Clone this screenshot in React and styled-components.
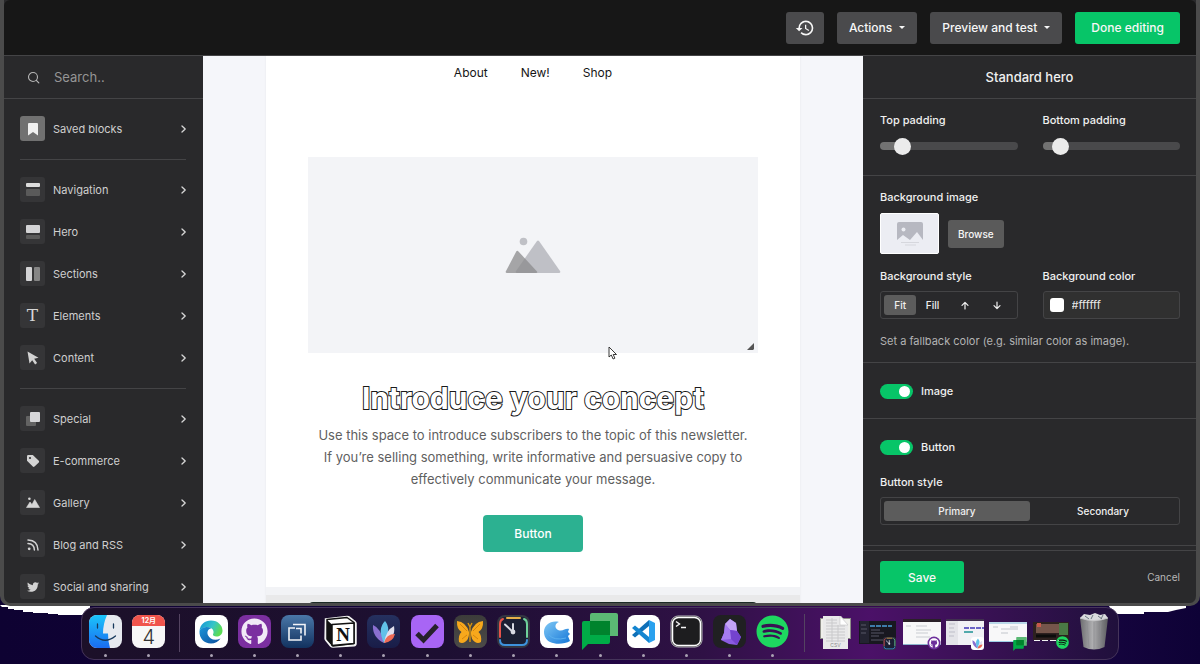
import React from "react";
import styled, { createGlobalStyle, css } from "styled-components";
import { MdHistory } from "react-icons/md";
import { FaGithub, FaTwitter, FaSpotify } from "react-icons/fa";

const GlobalStyle = createGlobalStyle`
  *, *::before, *::after { box-sizing: border-box; }
  body { margin: 0; background: #0d0230; }
  body, button, input { font-family: Inter, "Liberation Sans", sans-serif; }
  button { border: 0; padding: 0; background: none; color: inherit; cursor: pointer; }
  h1, h2, p, fieldset, legend { margin: 0; padding: 0; border: 0; }
`;

/* ---------- desktop and window ---------- */

const Desktop = styled.div`
  position: relative;
  display: flex;
  flex-direction: column;
  height: 100vh;
  min-height: 600px;
  overflow: hidden;
  background: linear-gradient(90deg, #0e0232 0%, #12033a 40%, #33084f 64%, #33094f 78%, #170540 90%, #0e0236 100%);
`;

const AppWindow = styled.div`
  flex: 1;
  min-height: 0;
  display: flex;
  flex-direction: column;
  border: solid #4b4b4b;
  border-width: 0 4px 3px;
  border-radius: 0 0 10px 10px;
  background: #29292b;
  overflow: hidden;
  position: relative;
`;

const TopBar = styled.header`
  display: flex;
  justify-content: flex-end;
  align-items: center;
  gap: 13px;
  flex: 0 0 56px;
  padding: 0 16px;
  background: #171717;
  border-bottom: 1px solid #444446;
  border-radius: 6px 6px 0 0;
`;

const Button = styled.button`
  display: flex;
  align-items: center;
  justify-content: center;
  gap: 7px;
  height: ${(p) => p.$height || 32}px;
  padding: 0 ${(p) => p.$pad || 12}px;
  border-radius: 3px;
  background: ${(p) => (p.$primary ? "#07c568" : p.$soft ? "#5a5a5a" : "#4a4a4c")};
  color: #f7f7f7;
  font-size: ${(p) => p.$size || 12}px;
  font-weight: 500;
  white-space: nowrap;
`;

const Caret = styled.span`
  border: solid transparent;
  border-width: 3px 3px 0;
  border-top-color: currentColor;
`;

const Workspace = styled.div`
  flex: 1;
  min-height: 0;
  display: grid;
  grid-template-columns: 199px minmax(0, 1fr) 333px;
`;

/* ---------- block library ---------- */

const Sidebar = styled.nav`
  overflow: hidden;
  color: #cfcfcf;
`;

const SearchRow = styled.label`
  display: flex;
  align-items: center;
  height: 43px;
  padding: 0 17px 0 23px;
  gap: 14px;
  border-bottom: 1px solid #444446;
`;

const SearchInput = styled.input`
  flex: 1;
  min-width: 0;
  padding: 0;
  border: 0;
  outline: 0;
  background: none;
  color: #e5e5e5;
  font-size: 13px;
  &::placeholder { color: #959595; opacity: 1; }
`;

const BlockGroup = styled.ul`
  list-style: none;
  display: flex;
  flex-direction: column;
  gap: 17px;
  margin: 0 17px 0 16px;
  padding: 17px 0 18px;
  & + & { border-top: 1px solid #444446; }
`;

const BlockRow = styled.button`
  display: flex;
  align-items: center;
  gap: 8px;
  width: 100%;
  height: 25px;
  text-align: left;
  font-size: 11px;
  & > span:nth-child(2) { flex: 1; }
`;

const BlockIcon = styled.span`
  display: grid;
  place-items: center;
  width: 25px;
  height: 25px;
  border-radius: 3px;
  background: ${(p) => (p.$active ? "#717171" : "#353537")};
`;

const LetterIcon = styled.span`
  font: 400 17px/17px "DejaVu Serif", serif;
  color: #d6d6d6;
`;

/* ---------- email canvas ---------- */

const Canvas = styled.main`
  overflow: hidden;
  background: #f5f6fa;
`;

const Email = styled.article`
  max-width: 534px;
  margin: 0 auto;
  background: #fff;
  text-align: center;
  box-shadow: 0 0 2px #e6e7ec;
`;

const EmailNav = styled.nav`
  display: flex;
  justify-content: center;
  gap: 33px;
  height: 101px;
  padding-top: 9px;
  a { color: #161616; font-size: 12px; line-height: 16px; text-decoration: none; }
`;

const Hero = styled.section`
  display: flex;
  flex-direction: column;
  align-items: center;
  padding: 0 42px 35px;
`;

const HeroImage = styled.div`
  position: relative;
  display: grid;
  place-items: center;
  width: 100%;
  height: 196px;
  background: #f3f4f7;
`;

const Resize = styled.svg`
  position: absolute;
  right: 4px;
  bottom: 3px;
`;

const Cursor = styled.svg`
  position: absolute;
  left: 300px;
  bottom: -8px;
`;

const HeroTitle = styled.h1`
  margin-top: 27px;
  font-size: 30px;
  line-height: 36px;
  font-weight: 700;
  color: #fff;
  -webkit-text-stroke: 2px #1a1a1a;
  paint-order: stroke fill;
  white-space: nowrap;
`;

const HeroText = styled.p`
  margin-top: 8px;
  font-size: 13px;
  line-height: 22px;
  color: #5f5f5f;
  white-space: nowrap;
`;

const HeroButton = styled.button`
  width: 100px;
  height: 37px;
  margin-top: 25px;
  border-radius: 4px;
  background: #2cb191;
  color: #fff;
  font-size: 12px;
  font-weight: 500;
`;

const NextBlock = styled.section`
  border-top: 8px solid #f2f3f6;
  padding: 7px 43px 0;
  background: #e9e9ea;
  &::before { content: ""; display: block; height: 20px; border-radius: 4px; background: #1d2b26; }
`;

/* ---------- settings panel ---------- */

const Panel = styled.aside`
  display: flex;
  flex-direction: column;
  min-height: 0;
  color: #f0f0f0;
  font-size: 11px;
  line-height: 14px;
  font-weight: 500;
`;

const PanelTitle = styled.h2`
  flex: none;
  height: 43px;
  font-size: 13px;
  line-height: 42px;
  font-weight: 500;
  text-align: center;
  border-bottom: 1px solid #444446;
`;

const PanelBody = styled.div`
  flex: 1;
  min-height: 0;
  overflow: hidden;
`;

const Section = styled.section`
  display: flex;
  flex-direction: column;
  padding: ${(p) => p.$pad};
  border-bottom: 1px solid #444446;
`;

const Columns = styled.div`
  display: grid;
  grid-template-columns: repeat(2, minmax(0, 1fr));
  gap: 25px;
`;

const Field = styled.div`
  display: flex;
  flex-direction: column;
  gap: 8px;
  margin-top: ${(p) => p.$top || 0}px;
`;

const Range = styled.input.attrs({ type: "range" })`
  appearance: none;
  width: 100%;
  height: 17px;
  margin: 2px 0 0;
  background: none;
  &::-webkit-slider-runnable-track {
    height: 8px;
    border-radius: 4px;
    background: linear-gradient(90deg, #727272 ${(p) => p.value}%, #49494b ${(p) => p.value}%);
  }
  &::-webkit-slider-thumb {
    appearance: none;
    width: 17px;
    height: 17px;
    margin-top: -4px;
    border-radius: 50%;
    background: #ebebeb;
  }
`;

const ImageRow = styled.div`
  display: flex;
  align-items: center;
  gap: 9px;
  margin: 9px 0 15px;
`;

const Thumb = styled.div`
  display: grid;
  place-items: center;
  width: 59px;
  height: 41px;
  border-radius: 2px;
  border: 1px solid #fff;
  background: #ecedf3;
`;

const Segments = styled.fieldset`
  display: grid;
  grid-template-columns: repeat(${(p) => p.$count}, minmax(0, 1fr));
  min-width: 0;
  height: 28px;
  padding: 3px;
  border: 1px solid #444446;
  border-radius: 3px;
`;

const Segment = styled.label`
  position: relative;
  display: grid;
  place-items: center;
  height: 20px;
  border-radius: 3px;
  font-size: 10px;
  input { position: absolute; inset: 0; margin: 0; opacity: 0; }
  &:has(input:checked) { background: #5c5c5c; }
`;

const ColorField = styled.div`
  display: flex;
  align-items: center;
  gap: 8px;
  height: 28px;
  padding: 0 6px;
  border: 1px solid #444446;
  border-radius: 3px;
  background: #303030;
  input { flex: 1; min-width: 0; padding: 0; border: 0; outline: 0; background: none; color: #e8e8e8; font-size: 11px; }
`;

const Swatch = styled.span`
  width: 14px;
  height: 14px;
  border-radius: 3px;
  background: #fff;
`;

const Hint = styled.p`
  margin-top: 15px;
  color: #b3b3b3;
  font-weight: 400;
`;

const Toggle = styled.label`
  display: flex;
  align-items: center;
  gap: 8px;
  height: 16px;
  input {
    appearance: none;
    display: flex;
    justify-content: flex-end;
    align-items: center;
    width: 33px;
    height: 15px;
    margin: 0;
    padding: 0 3px;
    border-radius: 8px;
    background: #07c568;
  }
  input::before { content: ""; width: 11px; height: 11px; border-radius: 50%; background: #fff; }
`;

const PanelFooter = styled.footer`
  display: flex;
  align-items: center;
  justify-content: space-between;
  flex: 0 0 53px;
  padding: 0 16px 0 17px;
  border-top: 1px solid #444446;
`;

const Cancel = styled.button`
  color: #b8b8b8;
  font-size: 10px;
`;

/* ---------- dock ---------- */

const Glow = styled.svg`
  position: absolute;
  bottom: 48px;
  ${(p) => (p.$right ? css`right: 14px;` : css`left: 0;`)}
`;

const Dock = styled.nav`
  position: relative;
  display: flex;
  flex: 0 0 53px;
  width: calc(100% - 162px);
  margin: 1px auto 4px;
  padding: 0 2px;
  border: 1px solid #45345a;
  border-radius: 13px;
  background: linear-gradient(90deg, #1c1029 0%, #1d0f32 35%, #2f1145 60%, #4b1168 76%, #371152 88%, #20103c 100%);
`;

const DockSlot = styled.button`
  flex: 1 1 0;
  min-width: 0;
  display: flex;
  flex-direction: column;
  align-items: center;
  padding-top: ${(p) => (p.$running ? 7 : 5)}px;
  svg { display: block; overflow: visible; flex: none; }
  ${(p) => p.$running && css`
    &::after {
      content: "";
      width: 3px;
      height: 3px;
      margin-top: 6px;
      border-radius: 50%;
      background: #aaa2b3;
    }
  `}
`;

const DockRule = styled.span`
  flex: 0 0 19px;
  display: flex;
  justify-content: center;
  &::before { content: ""; width: 1px; margin: 6px 0 7px; background: #544461; }
`;

const Tile = styled.span`
  display: grid;
  place-items: center;
  place-content: center;
  flex: none;
  width: 33px;
  height: 33px;
  border-radius: 8px;
  overflow: ${(p) => (p.$open ? "visible" : "hidden")};
  background: ${(p) => p.$bg || "none"};
  color: ${(p) => p.$color || "#fff"};
`;

const CalendarTile = styled(Tile)`
  grid-template: 11px 22px / 33px;
  color: #333;
  font-size: 20px;
  line-height: 22px;
  font-weight: 300;
  b {
    width: 100%;
    background: #f0544c;
    color: #fff;
    font: 700 7px/11px Inter, "Noto Sans CJK JP", sans-serif;
  }
`;

/* ---------- drawings ---------- */

const Svg = ({ w, h = w, vb, children }) => (
  <svg width={w} height={h} viewBox={vb || `0 0 ${w} ${h}`} fill="none" aria-hidden="true">{children}</svg>
);

const Chevron = () => (
  <Svg w={6} h={8}><path d="M2 1l3.2 3L2 7" stroke="#d6d6d6" strokeWidth="1.3" strokeLinecap="round" strokeLinejoin="round" /></Svg>
);

const blockIcons = {
  saved: <Svg w={12} h={14}><path d="M1 2Q1 1 2 1h8q1 0 1 1v11.4L6 10l-5 3.4z" fill="#f0f0f0" /></Svg>,
  navigation: <Svg w={14}><rect width="14" height="4" y="0" rx="1" fill="#dcdcdc" /><rect width="14" height="7" y="6" rx="1" fill="#5a5a5a" /></Svg>,
  hero: <Svg w={14}><rect width="14" height="8" rx="1" fill="#d4d4d6" /><rect width="14" height="4" y="10" rx="1" fill="#5a5a5a" /></Svg>,
  sections: <Svg w={14}><rect width="6" height="14" rx="1" fill="#d4d4d6" /><rect width="6" height="14" x="8" rx="1" fill="#858585" /></Svg>,
  elements: <LetterIcon aria-hidden="true">T</LetterIcon>,
  content: <Svg w={14}><path d="M1.500 0.500l11 6.300-4.300 1 2.900 4.200-2 1.500-2.900-4.200-2.700 3.200z" fill="#d2d2d2" /></Svg>,
  special: <Svg w={14}><rect x="0" y="4" width="10" height="10" rx="1" fill="#636363" /><rect x="4" y="0" width="10" height="10" rx="1" fill="#d6d6d8" /></Svg>,
  ecommerce: <Svg w={14}><path d="M1 2.200Q1 1 2.200 1h4.600l6 5.700q.8.9 0 1.700l-4.300 4.200q-.8.8-1.700 0L1 6.800z" fill="#d4d4d4" /><circle cx="4" cy="4" r="1.100" fill="#353537" /></Svg>,
  gallery: <Svg w={14}><path d="M.5 11.500L4 6l2 2.600L8.700 3.500l4.800 8z" fill="#d6d6d6" stroke="#d6d6d6" strokeWidth=".6" strokeLinejoin="round" /><circle cx="3.400" cy="2.800" r="1.300" fill="#d6d6d6" /></Svg>,
  rss: <Svg w={14}><g stroke="#d2d2d2" strokeWidth="1.500" strokeLinecap="round"><path d="M2 2q9.800.4 10 10M2 5.600q6.200.4 6.400 6.400" /></g><circle cx="3.200" cy="10.800" r="1.400" fill="#d2d2d2" /></Svg>,
  social: <FaTwitter size={12} color="#d2d2d2" aria-hidden="true" />,
};

const Finder = () => (
  <Svg w={33}>
    <defs>
      <linearGradient id="fb" x2="0" y2="1"><stop stopColor="#1bc5fb" /><stop offset="1" stopColor="#1a6bf0" /></linearGradient>
      <clipPath id="fc"><rect width="33" height="33" rx="8" /></clipPath>
    </defs>
    <g clipPath="url(#fc)">
      <rect width="33" height="33" fill="#e6e9ef" />
      <path d="M0 0h18Q14 9 14 18.500h5Q19 27 21 33H0z" fill="url(#fb)" />
      <path d="M8.500 9v4M24.500 9v4" stroke="#17385c" strokeWidth="1.300" strokeLinecap="round" />
      <path d="M6.500 21Q16 29.500 26.500 21" stroke="#17385c" strokeWidth="1.300" strokeLinecap="round" />
    </g>
  </Svg>
);

const Edge = () => (
  <Svg w={24}>
    <defs>
      <linearGradient id="e1" x2="1" y2=".4"><stop stopColor="#1492d8" /><stop offset=".6" stopColor="#35c4c9" /><stop offset="1" stopColor="#5bdb55" /></linearGradient>
      <linearGradient id="e2" x2="1" y2="1"><stop stopColor="#1c95d8" /><stop offset="1" stopColor="#0d4f9e" /></linearGradient>
    </defs>
    <path d="M.5 11C1 4.500 6 .5 12 .5c7 0 11.500 5 11.500 10 0 4-3 6-6 6-2.500 0-4-1-3.500-2.200 1-1.500.8-4.300-1.300-5.800C8.500 6 2.500 7 .5 11z" fill="url(#e1)" />
    <path d="M.5 11C2.500 7 8.500 6 12.200 8.300c-3.500.8-4.500 4-3.200 7 1.800 4 7 6 12.500 3.200C19 22 16 23.500 12 23.500 5 23.500 0 18 .5 11z" fill="url(#e2)" />
  </Svg>
);

const Boxes = () => (
  <Svg w={20}><g stroke="#f2f4f8" strokeWidth="1.600"><path d="M6 2.500h12v11" /><path d="M8 6H2v12h12v-4.500" /><path d="M9 6.500h5v5" /></g></Svg>
);

const Notion = () => (
  <Svg w={33}>
    <path d="M1.500 4L23 1.500q2 0 3 1l5 4q1 .8 1 2v20q0 2-2 2.200L9 32q-1.500 0-2.500-1L2 25.500q-.9-1-.9-2z" fill="#fff" stroke="#f4f4f4" strokeWidth="1.500" />
    <path d="M3 4.500L23 2.500l7 5v21L9 31l-6-7z" stroke="#111" strokeWidth="1.500" strokeLinejoin="round" fill="#fff" />
    <path d="M3 5l5 4.500v20.500L3 24z" fill="#111" />
    <path d="M8 9.500L30 8v20.500L8 30.500z" fill="#fff" stroke="#111" strokeWidth="1.500" strokeLinejoin="round" />
    <text x="19" y="26" textAnchor="middle" fontFamily="Liberation Serif, serif" fontWeight="700" fontSize="19" fill="#111">N</text>
  </Svg>
);

const Lotus = () => (
  <Svg w={24}>
    <path d="M12 23Q0 17 1 5q8 3 11 18z" fill="#8a6fd0" />
    <path d="M12 23Q5 9 13 1q7 8-1 22z" fill="#62c1e8" />
    <path d="M12 23Q14 10 22 6q2 12-10 17z" fill="#dfe0ee" />
    <path d="M12 23q2-9 11-9-2 8-11 9z" fill="#ee6a55" />
  </Svg>
);

const Check = () => <Svg w={26}><path d="M3 14.500l6.500 6.500L23 6.500" stroke="#26212b" strokeWidth="5" /></Svg>;

const Butterfly = () => (
  <Svg w={28}>
    <path d="M13 14Q10 4 1 3q-.5 8 4.500 11Q2 17 3 24q3 2 6 0 4-3 4-8z" fill="#f7a81c" />
    <path d="M15 14Q18 4 27 3q.5 8-4.500 11Q26 17 25 24q-3 2-6 0-4-3-4-8z" fill="#f7a81c" />
    <path d="M14 9v15M14 9l-2-4M14 9l2-4" stroke="#d8930f" strokeWidth="1.400" />
    <path d="M4 6l7 7M24 6l-7 7M6 21l5-4M22 21l-5-4" stroke="#c97a0b" strokeWidth=".8" />
  </Svg>
);

const Clock = ({ size = 33 }) => (
  <Svg w={size} vb="0 0 33 33">
    <rect width="33" height="33" rx="8" fill="#343642" />
    <rect x="2" y="2" width="29" height="29" rx="6" fill="#1b1f33" />
    <g strokeWidth="2" strokeLinecap="round">
      <path d="M10 3h13" stroke="#e8b04a" /><path d="M6 4Q3 5 3 9v13" stroke="#e5534b" />
      <path d="M27 4q3 1 3 5v13" stroke="#6fd39a" /><path d="M3 25q0 5 5 5h17q5 0 5-5" stroke="#3e93dc" />
    </g>
    <path d="M16 17L8 9.500M16 17V9" stroke="#d8dae2" strokeWidth="2" strokeLinecap="round" />
    <circle cx="16" cy="17" r="2.400" fill="#d8dae2" />
  </Svg>
);

const Wave = () => (
  <Svg w={28}>
    <defs><linearGradient id="wv" x2="1" y2="1"><stop stopColor="#7fc8f5" /><stop offset="1" stopColor="#1677d8" /></linearGradient></defs>
    <path d="M1 14C1 7 8 2 16 4c-4 1-5 6-1 8 5 2 7-2 11-1l-1 3 2 2-2 2 2 5c-5 3-14 4-20 1-4-2-6-6-6-10z" fill="url(#wv)" />
    <path d="M6 17q5 6 17 3" stroke="#5bb0ee" strokeWidth="1" />
  </Svg>
);

const Chat = ({ w = 36, h = 37 }) => (
  <Svg w={w} h={h} vb="0 0 36 37">
    <path d="M10 0h24q2 0 2 2v21H12V22H8V2q0-2 2-2z" fill="#5bb974" />
    <path d="M2 8h26v21q0 2-2 2H6l-6 6V10q0-2 2-2z" fill="#00ac47" />
    <path d="M8 8h20v14H8z" fill="#00832d" />
  </Svg>
);

const VsCode = () => (
  <Svg w={25}>
    <path d="M18 1l6 3v17l-6 3z" fill="#2aa1ee" />
    <path d="M18 1v6L4 18.500 1 16z" fill="#0f70b8" /><path d="M18 24v-6L4 6.500 1 9z" fill="#1485d0" />
  </Svg>
);

const Terminal = () => (
  <Svg w={33}>
    <rect x="1" y="1" width="31" height="31" rx="7" fill="#1d1d1f" stroke="#b9b9bd" strokeWidth="1" />
    <rect x="2.500" y="2.500" width="28" height="28" rx="6" stroke="#fff" strokeWidth="1.500" />
    <path d="M6 6.500l3.500 2.500L6 11.500M11 12.500h5" stroke="#f5f5f5" strokeWidth="1.400" />
  </Svg>
);

const Crystal = () => (
  <Svg w={24} h={28}>
    <path d="M12 1l6 4 1 8 4 6-4 8-8-1-8-4 3-7 1-9z" fill="#8a5be0" />
    <path d="M12 1l6 4 1 8-7-1-5-6z" fill="#c3a3f7" />
    <path d="M12 12l7 1 4 6-4 8-6-6z" fill="#7443cf" /><path d="M7 6l5 6 1 9-10 1 3-7z" fill="#a57cf0" />
  </Svg>
);

const Documents = () => (
  <Svg w={31} h={36}>
    <path d="M0 5h31v21H0z" fill="#8d8e88" /><path d="M1 6h29v19H1z" fill="#efefeb" />
    <path d="M3 3h18l7 8v25H3z" fill="#e9e9ea" /><path d="M20 3l8 9h-8z" fill="#fff" stroke="#bbb" strokeWidth=".5" />
    <path d="M6 7h11M6 10h11M6 13h19M6 16h19M6 19h19M6 22h19M6 25h19M6 28h19M12 5v24M18 12v17" stroke="#c9c9cb" strokeWidth="1" />
    <text x="15.500" y="34" textAnchor="middle" fontFamily="Inter, sans-serif" fontSize="5" fill="#8a8a8a">CSV</text>
  </Svg>
);

const Trash = () => (
  <Svg w={30} h={37}>
    <defs><linearGradient id="tr" x2="1"><stop stopColor="#6d6d70" /><stop offset=".45" stopColor="#aeaeb0" /><stop offset="1" stopColor="#5c5c60" /></linearGradient></defs>
    <path d="M1 5l4-4 6 1 5-2 5 2 5-1 3 4-3 4H4z" fill="#d9dadd" />
    <path d="M6 3l4 3M14 2l-2 4M19 3l4 3M24 2l-2 4" stroke="#6b7780" strokeWidth="1" />
    <path d="M1 5q14 5 28 0l-3.500 29q-10.500 5-21 0z" fill="url(#tr)" />
    <path d="M1 5q14 5 28 0" stroke="#c8c8ca" />
    <path d="M8 9l2 26M15 9v27M22 9l-2 26" stroke="#8d8d90" strokeWidth=".7" />
  </Svg>
);

const MiniWindow = ({ kind, children }) => (
  <Svg w={38} h={36}>
    <g transform="translate(0 3)">
      {kind === "code" && <>
        <rect y="5" width="37" height="23" fill="#181820" /><rect x="1" y="5" width="9" height="22" fill="#242432" />
        <path d="M11 10h22" stroke="#3e7ba8" strokeWidth="2" strokeDasharray="5 1" /><path d="M12 14h9M12 17h13M12 20h8M12 24h12M2 9h5M2 13h6M2 17h5" stroke="#565666" />
      </>}
      {kind === "page" && <>
        <rect y="3" width="38" height="26" fill="#f7f7f8" /><rect y="3" width="38" height="3" fill="#2a2028" />
        <path d="M13 10h11M13 14h15M13 17h12M13 21h14M3 10h5" stroke="#c9ccd1" /><path d="M0 28.500h38" stroke="#8bb4cc" />
      </>}
      {kind === "doc" && <>
        <rect y="5" width="38" height="24" fill="#f1f1f5" /><rect y="3" width="38" height="2" fill="#40304f" /><rect y="5" width="12" height="24" fill="#e4e4e9" />
        <path d="M18 12h20" stroke="#6a63c6" strokeWidth="2" strokeDasharray="5 1" /><path d="M18 16h9" stroke="#52a9ac" strokeWidth="2" /><path d="M3 8h6M3 12h5M3 16h6M3 20h5" stroke="#bdbdc8" />
      </>}
      {kind === "chat" && <>
        <rect y="6" width="38" height="20" fill="#f8f8f9" /><rect y="6" width="38" height="2" fill="#b9d8e8" />
        <path d="M4 11h5M12 13h17M12 17h7M21 11h8" stroke="#c2c6cc" /><path d="M0 25.500h38" stroke="#9fd0e8" />
      </>}
      {kind === "player" && <>
        <rect x="1" y="6" width="36" height="18" fill="#2d201f" /><rect x="4" y="8" width="23" height="9" fill="#75554b" /><rect x="5" y="7" width="4" height="4" fill="#c8584a" />
        <rect x="27" y="7" width="9" height="12" fill="#4a7a45" /><path d="M4 20h20" stroke="#0c0c0c" strokeWidth="3" /><path d="M2 24.500h32" stroke="#f3f3f3" strokeDasharray="6 2" />
      </>}
      {children}
    </g>
  </Svg>
);

/* ---------- data ---------- */

const blockGroups = [
  [["saved", "Saved blocks"]],
  [["navigation", "Navigation"], ["hero", "Hero"], ["sections", "Sections"], ["elements", "Elements"], ["content", "Content"]],
  [["special", "Special"], ["ecommerce", "E-commerce"], ["gallery", "Gallery"], ["rss", "Blog and RSS"], ["social", "Social and sharing"]],
];

const dockItems = [
  ["Finder", <Finder />, true],
  ["Calendar", <CalendarTile $bg="#f7f7f7"><b>12月</b>4</CalendarTile>, true],
  null,
  ["Edge", <Tile $bg="#fff"><Edge /></Tile>, true],
  ["GitHub", <Tile $bg="#7b2fa0" $color="#f1e9f7"><FaGithub size={27} /></Tile>, true],
  ["Remote desktop", <Tile $bg="linear-gradient(#4a77a8, #12325f)"><Boxes /></Tile>, true],
  ["Notion", <Notion />, true],
  ["Journal", <Tile $bg="linear-gradient(#25305f, #191d48)"><Lotus /></Tile>, true],
  ["Tasks", <Tile $bg="#a865f5"><Check /></Tile>, true],
  ["Butterfly", <Tile $bg="linear-gradient(#3c3c3a, #4b4a48)"><Butterfly /></Tile>, true],
  ["Clock", <Clock />, true],
  ["Wave", <Tile $bg="#fff"><Wave /></Tile>, true],
  ["Chat", <Tile $open><Chat /></Tile>, true],
  ["Code editor", <Tile $bg="#fff"><VsCode /></Tile>, true],
  ["Terminal", <Terminal />, true],
  ["Notes", <Tile $bg="#202022"><Crystal /></Tile>, true],
  ["Spotify", <Tile $open><FaSpotify size={33} color="#1ed760" /></Tile>, true],
  null,
  ["Documents", <Documents />, false],
  ["Editor window", <MiniWindow kind="code"><g transform="translate(24 21)"><Clock size={13} /></g></MiniWindow>, false],
  ["GitHub window", <MiniWindow kind="page"><circle cx="31" cy="27" r="6.500" fill="#6d2f9b" /><g transform="translate(26 22)"><FaGithub size={10} color="#fff" /></g></MiniWindow>, false],
  ["Journal window", <MiniWindow kind="doc"><rect x="25" y="21" width="13" height="13" rx="3" fill="#fff" /><g transform="translate(26 22) scale(.46)"><Lotus /></g></MiniWindow>, false],
  ["Chat window", <MiniWindow kind="chat"><g transform="translate(24 21)"><Chat w={14} h={14} /></g></MiniWindow>, false],
  ["Spotify window", <MiniWindow kind="player"><circle cx="31" cy="27" r="5" fill="#111" /><g transform="translate(24 20)"><FaSpotify size={13} color="#1ed760" /></g></MiniWindow>, false],
  ["Trash", <Trash />, false],
];

function Option({ name, label, children, checked }) {
  return (
    <Segment>
      <input type="radio" name={name} aria-label={label} defaultChecked={checked} />
      {children || label}
    </Segment>
  );
}

function RangeField({ id, label, start }) {
  const [value, setValue] = React.useState(start);
  return (
    <Field>
      <label htmlFor={id}>{label}</label>
      <Range id={id} value={value} onChange={(e) => setValue(e.target.value)} />
    </Field>
  );
}

const Arrow = ({ down }) => (
  <Svg w={8} h={9}>
    <path d={down ? "M4 1v6.500M1 4.700l3 3 3-3" : "M4 8V1.500M1 4.300l3-3 3 3"} stroke="#f0f0f0" strokeWidth="1.200" strokeLinecap="round" strokeLinejoin="round" />
  </Svg>
);

export default function App() {
  return (
    <Desktop>
      <GlobalStyle />
      <Glow width="90" height="11"><path d="M0 0h90v10H58V9H48V8H33V7H23V5H14V4H8V2H2z" fill="#fff" /></Glow>
      <Glow $right width="78" height="12"><path d="M0 0h78v4l-10 2-8 2H36v2H10L4 8z" fill="#fff" /></Glow>
      <AppWindow>
        <TopBar>
          <Button $pad={9} aria-label="History"><MdHistory size={20} /></Button>
          <Button>Actions <Caret /></Button>
          <Button>Preview and test <Caret /></Button>
          <Button $primary $pad={16}>Done editing</Button>
        </TopBar>
        <Workspace>
          <Sidebar aria-label="Blocks">
            <SearchRow>
              <Svg w={13}><circle cx="6" cy="6" r="4.500" stroke="#b5b5b5" strokeWidth="1.100" /><path d="M9.300 9.300l2.500 2.500" stroke="#b5b5b5" strokeWidth="1.200" strokeLinecap="round" /></Svg>
              <SearchInput type="text" placeholder="Search.." aria-label="Search blocks" />
            </SearchRow>
            {blockGroups.map((group, i) => (
              <BlockGroup key={i}>
                {group.map(([icon, label]) => (
                  <li key={icon}>
                    <BlockRow>
                      <BlockIcon $active={icon === "saved"}>{blockIcons[icon]}</BlockIcon>
                      <span>{label}</span>
                      <Chevron />
                    </BlockRow>
                  </li>
                ))}
              </BlockGroup>
            ))}
          </Sidebar>

          <Canvas>
            <Email>
              <EmailNav>
                <a href="#about">About</a>
                <a href="#new">New!</a>
                <a href="#shop">Shop</a>
              </EmailNav>
              <Hero>
                <HeroImage>
                  <Svg w={56} h={37}>
                    <circle cx="18.500" cy="4.500" r="3.800" fill="#bfc0c6" />
                    <path d="M32 4q1-1 2 0l21 30q1 2-1 2H12q-2 0-1-2z" fill="#bfc0c6" />
                    <path d="M11 15q1-2 2.500-.5L32 34.500q1 1.500-1 1.500H2q-2 0-1-2z" fill="#8b8b8c" fillOpacity=".75" />
                  </Svg>
                  <Resize width="7" height="7"><path d="M7 0v6l-1 1H0z" fill="#555" /></Resize>
                  <Cursor width="10" height="15" viewBox="0 0 10 15"><path d="M1 1v10l2.300-2 1.800 4 1.800-.8-1.700-3.700H8.500z" fill="#fff" stroke="#222" strokeWidth=".9" /></Cursor>
                </HeroImage>
                <HeroTitle>Introduce your concept</HeroTitle>
                <HeroText>
                  Use this space to introduce subscribers to the topic of this newsletter.<br />
                  If you’re selling something, write informative and persuasive copy to<br />
                  effectively communicate your message.
                </HeroText>
                <HeroButton>Button</HeroButton>
              </Hero>
              <NextBlock />
            </Email>
          </Canvas>

          <Panel>
            <PanelTitle>Standard hero</PanelTitle>
            <PanelBody>
              <Section $pad="14px 16px 21px 17px">
                <Columns>
                  <RangeField id="top-padding" label="Top padding" start={12} />
                  <RangeField id="bottom-padding" label="Bottom padding" start={8} />
                </Columns>
              </Section>
              <Section $pad="14px 16px 14px 17px">
                <span>Background image</span>
                <ImageRow>
                  <Thumb>
                    <Svg w={28} h={25}>
                      <path d="M1 3q0-2 2-2h22q2 0 2 2v16l-6-8-7 8-7-5-6 5z" fill="#b7b8c1" />
                      <circle cx="7.500" cy="8.500" r="2" fill="#ecedf3" /><path d="M5 21.500h18M9 24h11" stroke="#d6d7dd" />
                    </Svg>
                  </Thumb>
                  <Button $soft $height={28} $pad={10} $size={10}>Browse</Button>
                </ImageRow>
                <Columns>
                  <Field>
                    <span>Background style</span>
                    <Segments $count={4} aria-label="Background style">
                      <Option name="bg-style" label="Fit" checked />
                      <Option name="bg-style" label="Fill" />
                      <Option name="bg-style" label="Align top"><Arrow /></Option>
                      <Option name="bg-style" label="Align bottom"><Arrow down /></Option>
                    </Segments>
                  </Field>
                  <Field>
                    <label htmlFor="bg-color">Background color</label>
                    <ColorField><Swatch /><input id="bg-color" type="text" defaultValue="#ffffff" /></ColorField>
                  </Field>
                </Columns>
                <Hint>Set a fallback color (e.g. similar color as image).</Hint>
              </Section>
              <Section $pad="20px 16px 19px 17px">
                <Toggle><input type="checkbox" defaultChecked />Image</Toggle>
              </Section>
              <Section $pad="20px 16px 20px 17px">
                <Toggle><input type="checkbox" defaultChecked />Button</Toggle>
                <Field $top={20}>
                  <span>Button style</span>
                  <Segments $count={2} aria-label="Button style">
                    <Option name="btn-style" label="Primary" checked />
                    <Option name="btn-style" label="Secondary" />
                  </Segments>
                </Field>
              </Section>
            </PanelBody>
            <PanelFooter>
              <Button $primary $pad={28}>Save</Button>
              <Cancel>Cancel</Cancel>
            </PanelFooter>
          </Panel>
        </Workspace>
      </AppWindow>
      <Dock aria-label="Dock">
        {dockItems.map((item, i) =>
          item === null ? <DockRule key={i} /> : (
            <DockSlot key={i} aria-label={item[0]} $running={item[2]}>{item[1]}</DockSlot>
          )
        )}
      </Dock>
    </Desktop>
  );
}
